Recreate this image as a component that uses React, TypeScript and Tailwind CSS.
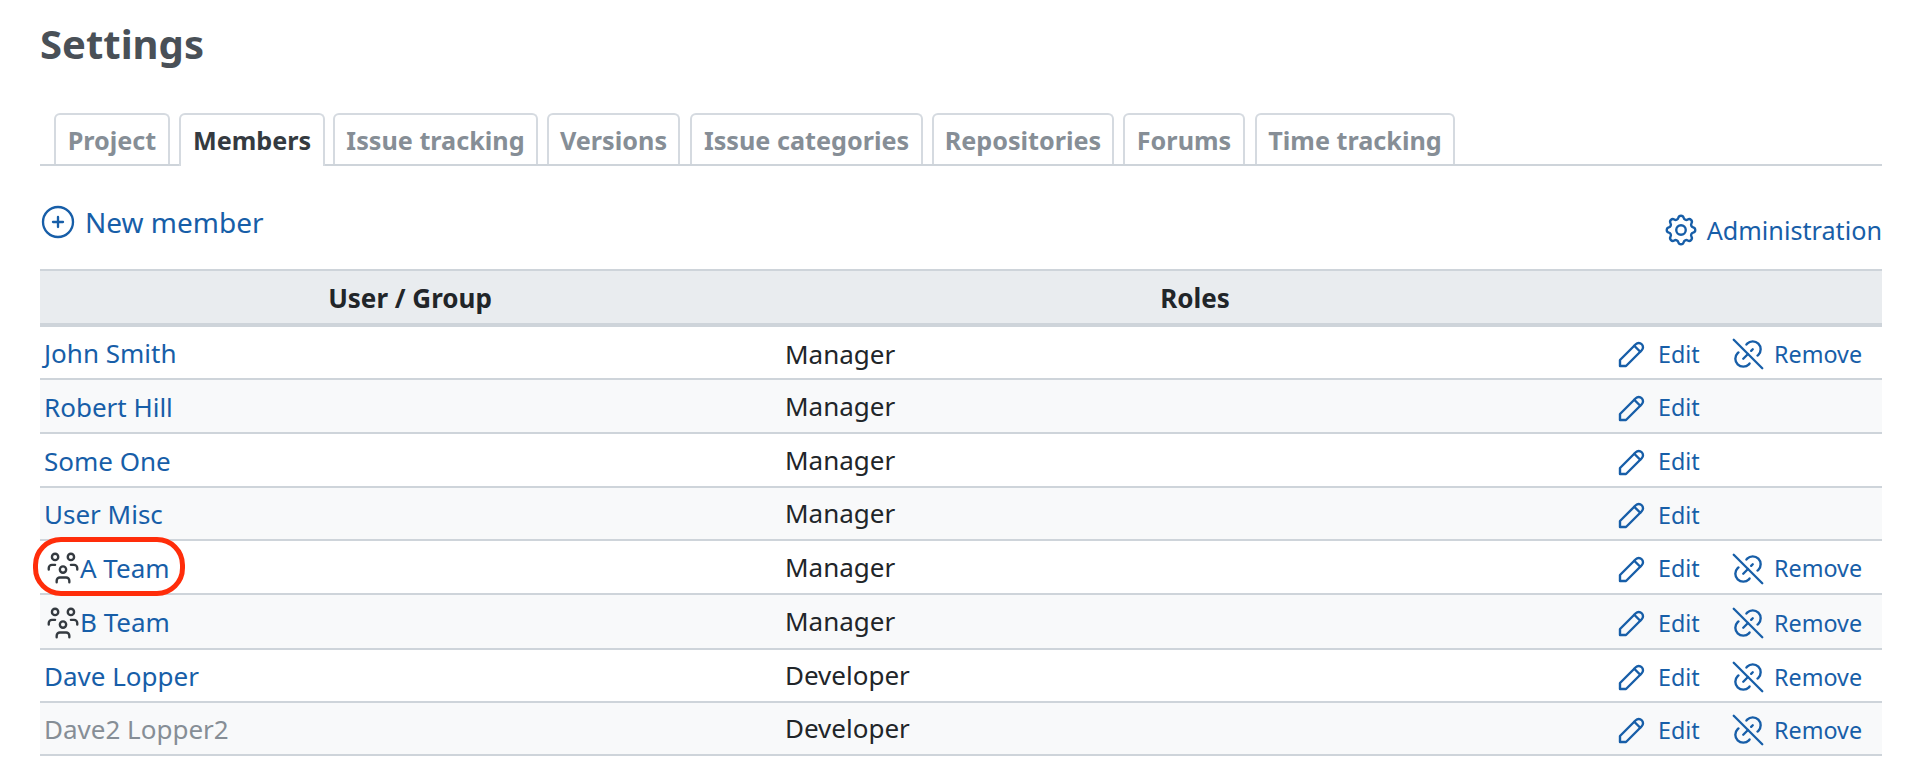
import { TbCirclePlus, TbLinkOff, TbPencil, TbSettings, TbUsersGroup } from "react-icons/tb";

const tabs = [
  { label: "Project", width: "w-[116px]", margin: "ml-[14px]" },
  { label: "Members", width: "w-[146px]", margin: "ml-[9px]", active: true },
  { label: "Issue tracking", width: "w-[205px]", margin: "ml-[8px]" },
  { label: "Versions", width: "w-[133px]", margin: "ml-[9px]" },
  { label: "Issue categories", width: "w-[233px]", margin: "ml-[10px]" },
  { label: "Repositories", width: "w-[182px]", margin: "ml-[9px]" },
  { label: "Forums", width: "w-[122px]", margin: "ml-[9px]" },
  { label: "Time tracking", width: "w-[200px]", margin: "ml-[10px]" },
];

const members = [
  { name: "John Smith", role: "Manager", remove: true, height: "h-[53px]" },
  { name: "Robert Hill", role: "Manager", height: "h-[54px]" },
  { name: "Some One", role: "Manager", height: "h-[54px]" },
  { name: "User Misc", role: "Manager", height: "h-[53px]" },
  { name: "A Team", role: "Manager", remove: true, group: true, height: "h-[54px]" },
  { name: "B Team", role: "Manager", remove: true, group: true, height: "h-[55px]" },
  { name: "Dave Lopper", role: "Developer", remove: true, height: "h-[53px]" },
  { name: "Dave2 Lopper2", role: "Developer", remove: true, locked: true, height: "h-[53px]" },
];

export default function App() {
  return (
    <div className="h-[768px] bg-white px-[40px] font-['Noto_Sans',sans-serif] text-[#212529] overflow-hidden">
      <h1 className="pt-[16px] h-[113px] text-[40px] leading-[56px] font-bold text-[#495057]">Settings</h1>

      <div className="flex h-[53px] border-b-2 border-[#ced4da]">
        {tabs.map((tab) => (
          <div
            key={tab.label}
            className={`${tab.width} ${tab.margin} flex justify-center pt-[7px] border-2 border-b-0 rounded-t-[6px] border-[#d5dae0] text-[25.2px] leading-[36px] font-bold ${
              tab.active ? "h-[53px] bg-white text-[#343a40]" : "h-[51px] text-[#868e96]"
            }`}
          >
            {tab.label}
          </div>
        ))}
      </div>

      <div className="flex h-[103px] justify-between text-[#175ea8]">
        <div className="-ml-[2px] flex items-start gap-[7px] pt-[36px] text-[28px] leading-[40px]">
          <TbCirclePlus size={40} strokeWidth={1.4} />
          <span>New member</span>
        </div>
        <div className="flex items-center gap-[7px] h-[38px] mt-[45px] text-[25.2px] leading-[36px]">
          <TbSettings size={38} strokeWidth={1.5} />
          <span>Administration</span>
        </div>
      </div>

      <div className="flex h-[58px] items-center border-t-2 border-b-4 border-[#ced4da] bg-[#e9ecef] pt-[2px] text-[26px] font-bold">
        <div className="w-[740px] text-center">User / Group</div>
        <div className="w-[830px] text-center">Roles</div>
      </div>

      {members.map((m, i) => (
        <div
          key={m.name}
          className={`flex ${m.height} items-center border-b-2 border-[#ced4da] ${i % 2 === 1 ? "bg-[#f8f9fa]" : "bg-white"}`}
        >
          <div className="relative flex w-[740px] items-center pl-[4px] pt-[2px] text-[26px]">
            {m.group ? (
              <span className="-mr-[2px] flex items-center text-[#343a40]">
                <TbUsersGroup size={38} strokeWidth={1.5} />
              </span>
            ) : null}
            <span className={m.locked ? "text-[#868e96]" : "text-[#175ea8]"}>{m.name}</span>
            {m.name === "A Team" ? (
              <div className="absolute left-[-7px] top-[-10px] h-[59px] w-[152px] rounded-[28px] border-[5px] border-[#ff2d0a]" />
            ) : null}
          </div>
          <div className={`w-[830px] pl-[5px] text-[26px] ${i === 0 ? "pt-[3px]" : ""}`}>{m.role}</div>
          <div className="flex flex-1 items-center pl-[4px] pt-[3px] text-[23.3px] text-[#175ea8]">
            <div className="flex w-[115px] items-center gap-[8px]">
              <TbPencil size={36} strokeWidth={1.6} />
              <span>Edit</span>
            </div>
            {m.remove ? (
              <div className="flex items-center gap-[7px]">
                <TbLinkOff size={38} strokeWidth={1.5} />
                <span>Remove</span>
              </div>
            ) : null}
          </div>
        </div>
      ))}
    </div>
  );
}
